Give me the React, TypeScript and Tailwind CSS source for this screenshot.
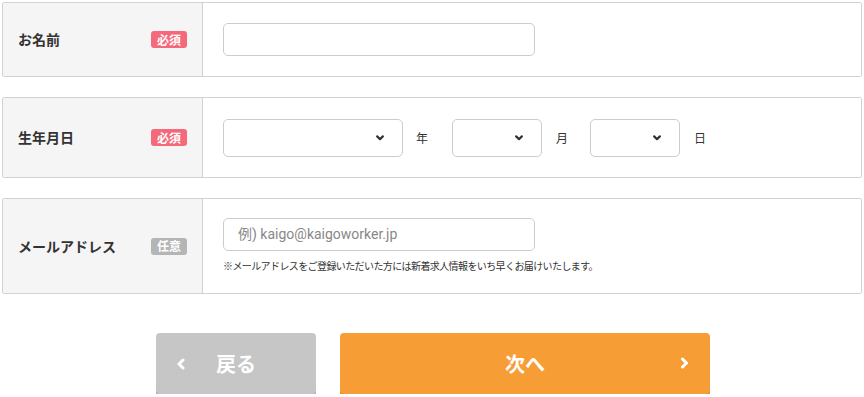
import React from "react";

function Badge({ required }: { required: boolean }) {
  return (
    <span
      className={`${
        required ? "bg-[#f46a7a]" : "bg-[#b5b5b5]"
      } inline-flex h-[17px] w-[36px] items-center justify-center rounded-[3px] text-[12px] font-bold leading-none text-white`}
    >
      {required ? "必須" : "任意"}
    </span>
  );
}

function ChevronDown() {
  return (
    <svg width="8" height="6" viewBox="0 0 8 6" className="text-[#333]">
      <path d="M1.2 1.4 L4 4.2 L6.8 1.4" fill="none" stroke="currentColor" strokeWidth="2.2" strokeLinecap="round" strokeLinejoin="round" />
    </svg>
  );
}

function Select({ width }: { width: string }) {
  return (
    <div
      className={`${width} flex h-[38px] items-center justify-end rounded-[5px] border border-[#cccccc] bg-white pr-[18px]`}
    >
      <ChevronDown />
    </div>
  );
}

function Row({
  label,
  required,
  height,
  children,
}: {
  label: string;
  required: boolean;
  height: string;
  children: React.ReactNode;
}) {
  return (
    <div className={`${height} flex rounded-[2px] border border-[#d2d2d2]`}>
      <div className="flex w-[200px] shrink-0 items-center justify-between border-r border-[#d2d2d2] bg-[#f5f5f5] pl-[15px] pr-[15px]">
        <span className="text-[14px] font-bold text-[#333]">{label}</span>
        <Badge required={required} />
      </div>
      <div className="flex flex-1 flex-col justify-center bg-white pl-[20px]">
        {children}
      </div>
    </div>
  );
}

export default function App() {
  return (
    <div
      className="w-[864px] bg-white px-[2px] pt-[2px]"
      style={{ fontFamily: '"Noto Sans CJK JP", "Noto Sans", sans-serif' }}
    >
      <div className="flex flex-col gap-[20px]">
        <Row label="お名前" required height="h-[75px]">
          <div className="h-[33px] w-[312px] rounded-[5px] border border-[#cccccc] bg-white" />
        </Row>

        <Row label="生年月日" required height="h-[81px]">
          <div className="flex items-center">
            <Select width="w-[180px]" />
            <span className="ml-[13px] mr-[24px] text-[12px] text-[#333]">年</span>
            <Select width="w-[90px]" />
            <span className="ml-[14px] mr-[22px] text-[12px] text-[#333]">月</span>
            <Select width="w-[90px]" />
            <span className="ml-[14px] text-[12px] text-[#333]">日</span>
          </div>
        </Row>

        <Row label="メールアドレス" required={false} height="h-[96px]">
          <div className="mt-[-3px] flex h-[33px] w-[312px] items-center rounded-[5px] border border-[#cccccc] bg-white pl-[14px]">
            <span
              className="text-[14px] text-[#888]"
              style={{ fontFamily: 'Roboto, "Noto Sans CJK JP", sans-serif' }}
            >
              例) kaigo@kaigoworker.jp
            </span>
          </div>
          <p className="mt-[10px] text-[10px] leading-none tracking-[-0.6px] text-[#333]">
            ※メールアドレスをご登録いただいた方には新着求人情報をいち早くお届けいたします。
          </p>
        </Row>
      </div>

      <div className="mt-[39px] flex justify-center gap-[24px] pl-[2px]">
        <button className="relative flex h-[61px] w-[160px] items-center rounded-[4px] bg-[#c6c6c6] pl-[20px] text-[20px] font-bold text-white shadow-[0_2px_0_#a9a9a9]">
          <svg width="10" height="12" viewBox="0 0 10 12" className="mr-[30px]">
            <path d="M7 2 L3 6 L7 10" fill="none" stroke="white" strokeWidth="3" strokeLinecap="round" strokeLinejoin="round" />
          </svg>
          戻る
        </button>
        <button className="relative flex h-[61px] w-[370px] items-center justify-center rounded-[4px] bg-[#f79d35] text-[20px] font-bold text-white shadow-[0_2px_0_#df8326]">
          次へ
          <svg width="11" height="12" viewBox="0 0 11 12" className="absolute right-[20px] top-[24px]">
            <path d="M3.5 2 L7.5 6 L3.5 10" fill="none" stroke="white" strokeWidth="3" strokeLinecap="round" strokeLinejoin="round" />
          </svg>
        </button>
      </div>
    </div>
  );
}
